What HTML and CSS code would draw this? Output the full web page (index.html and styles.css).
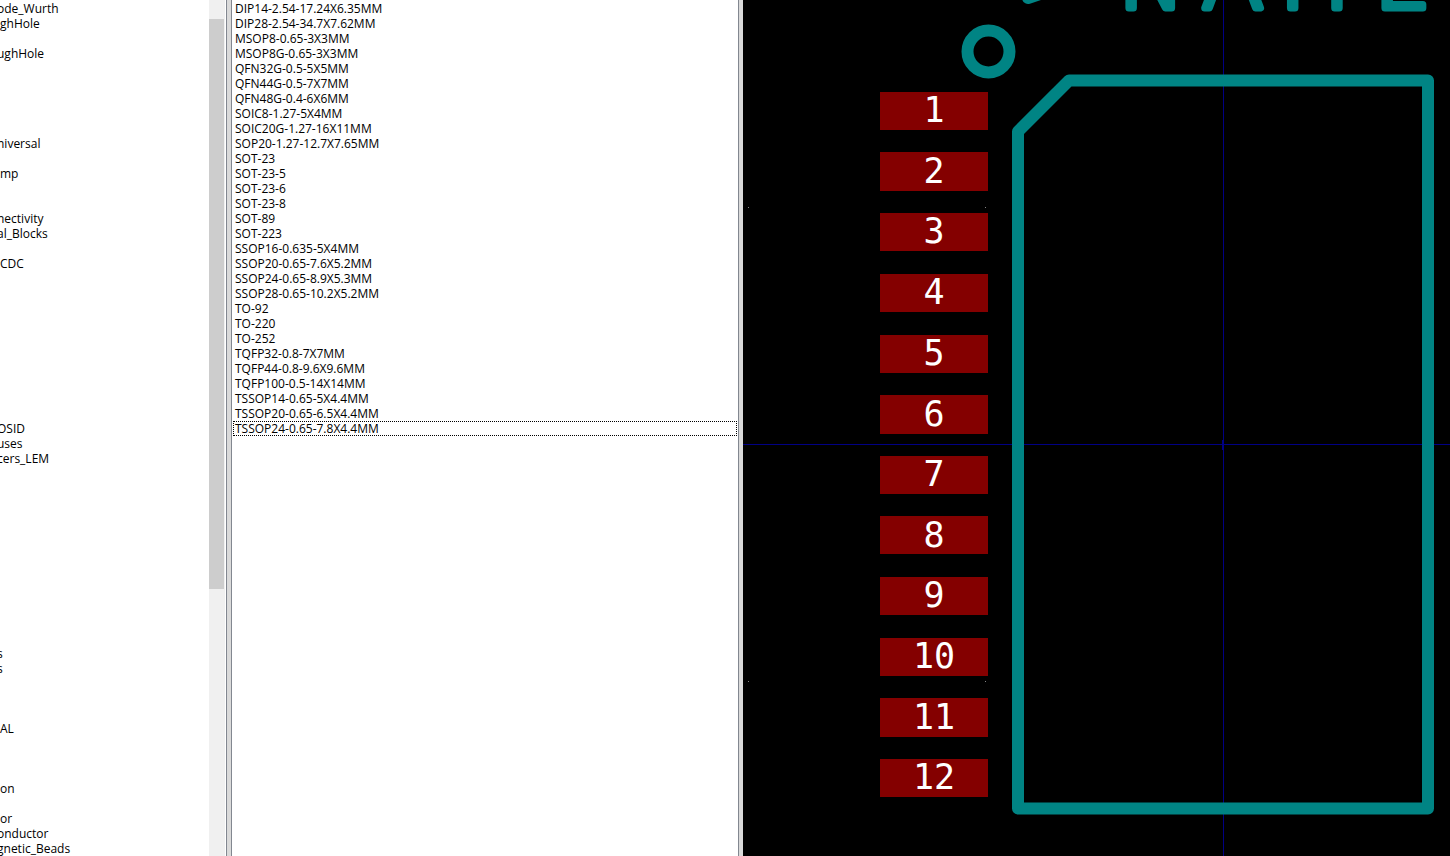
FILE: index.html
```html
<!DOCTYPE html>
<html lang="en">
<head>
<meta charset="utf-8">
<title>Footprint Library Browser</title>
<link rel="stylesheet" href="styles.css">
</head>
<body>
<main class="browser">
  <section class="libraries" aria-label="Libraries">
    <ul class="list library-list">
      <li class="cut">ode_Wurth</li><li>ghHole</li><li></li><li class="cut">ughHole</li><li></li>
      <li></li><li></li><li></li><li></li><li class="cut">niversal</li>
      <li></li><li>mp</li><li></li><li></li><li class="cut">nectivity</li>
      <li class="cut">al_Blocks</li><li></li><li>CDC</li><li></li><li></li>
      <li></li><li></li><li></li><li></li><li></li>
      <li></li><li></li><li></li><li class="cut">OSID</li><li class="cut">uses</li>
      <li class="cut">cers_LEM</li><li></li><li></li><li></li><li></li>
      <li></li><li></li><li></li><li></li><li></li>
      <li></li><li></li><li></li><li class="cut">s</li><li class="cut">s</li>
      <li></li><li></li><li></li><li>AL</li><li></li>
      <li></li><li></li><li>on</li><li></li><li>or</li>
      <li class="cut">onductor</li><li class="cut">gnetic_Beads</li>
    </ul>
    <div class="scrollbar"><div class="thumb"></div></div>
  </section>
  <div class="splitter"></div>
  <section class="footprints" aria-label="Footprints">
    <ul class="list footprint-list">
      <li>DIP14-2.54-17.24X6.35MM</li>
      <li>DIP28-2.54-34.7X7.62MM</li>
      <li>MSOP8-0.65-3X3MM</li>
      <li>MSOP8G-0.65-3X3MM</li>
      <li>QFN32G-0.5-5X5MM</li>
      <li>QFN44G-0.5-7X7MM</li>
      <li>QFN48G-0.4-6X6MM</li>
      <li>SOIC8-1.27-5X4MM</li>
      <li>SOIC20G-1.27-16X11MM</li>
      <li>SOP20-1.27-12.7X7.65MM</li>
      <li>SOT-23</li>
      <li>SOT-23-5</li>
      <li>SOT-23-6</li>
      <li>SOT-23-8</li>
      <li>SOT-89</li>
      <li>SOT-223</li>
      <li>SSOP16-0.635-5X4MM</li>
      <li>SSOP20-0.65-7.6X5.2MM</li>
      <li>SSOP24-0.65-8.9X5.3MM</li>
      <li>SSOP28-0.65-10.2X5.2MM</li>
      <li>TO-92</li>
      <li>TO-220</li>
      <li>TO-252</li>
      <li>TQFP32-0.8-7X7MM</li>
      <li>TQFP44-0.8-9.6X9.6MM</li>
      <li>TQFP100-0.5-14X14MM</li>
      <li>TSSOP14-0.65-5X4.4MM</li>
      <li>TSSOP20-0.65-6.5X4.4MM</li>
      <li class="focused">TSSOP24-0.65-7.8X4.4MM</li>
    </ul>
  </section>
  <div class="splitter splitter-end"></div>
  <section class="preview" aria-label="Footprint preview">
    <svg class="board" viewBox="0 0 707 856" preserveAspectRatio="xMinYMin slice">
      <g class="axis">
        <path class="axis-y" d="M480 0h1v856h-1z"/>
        <path d="M0 444h707v1H0zM479 440h1v10h-1z"/>
      </g>
      <g class="grid">
        <path d="M5 207h1v1H5zM242 207h1v1h-1zM5 681h1v1H5zM242 681h1v1h-1z"/>
      </g>
      <g class="silk">
        <path d="M285-2L297-6"/>
        <circle cx="245.5" cy="51.5" r="21"/>
        <path d="M275 131.500L326 80.500H685V808.500H275Z"/>
      </g>
      <text class="name" x="375 459 533 631" y="8">NAME</text>
      <g class="pads">
        <path d="M137 92h108v38H137zM137 152h108v39H137zM137 213h108v38H137zM137 274h108v38H137zM137 335h108v38H137zM137 395h108v39H137zM137 456h108v38H137zM137 516h108v38H137zM137 577h108v38H137zM137 638h108v38H137zM137 698h108v39H137zM137 759h108v38H137z"/>
      </g>
      <g class="pad-numbers">
        <text x="191" y="122">1</text>
        <text x="191" y="183">2</text>
        <text x="191" y="243">3</text>
        <text x="191" y="304">4</text>
        <text x="191" y="365">5</text>
        <text x="191" y="426">6</text>
        <text x="191" y="486">7</text>
        <text x="191" y="547">8</text>
        <text x="191" y="607">9</text>
        <text x="191" y="668">10</text>
        <text x="191" y="729">11</text>
        <text x="191" y="789">12</text>
      </g>
    </svg>
  </section>
</main>
</body>
</html>
```
FILE: styles.css
```css
* { box-sizing: border-box; }
body {
  margin: 0;
  background: #fff;
  color: #000;
  font: 12px/15px "Open Sans", "Noto Sans", sans-serif;
}
.browser {
  display: grid;
  grid-template-columns: 226px 6px 506px 5px 1fr;
  height: 100vh;
  overflow: hidden;
}
.list {
  list-style: none;
  margin: 0;
  padding: 1px 0 0;
}
.list li {
  height: 15px;
  white-space: nowrap;
}
.libraries {
  display: grid;
  grid-template-columns: 1fr 16px;
  padding-right: 1px;
  overflow: hidden;
}
.library-list { overflow: hidden; }
.cut { text-indent: -3px; }
.scrollbar {
  background: #f0f0f0;
  padding-top: 19px;
}
.thumb {
  width: 15px;
  height: 570px;
  background: #cdcdcd;
}
.splitter {
  background: #dadada;
  border: solid #828790;
  border-width: 0 1px;
}
.splitter-end { border-right: 0; }
.footprints { overflow: hidden; }
.footprint-list { padding: 1px 1px 0; }
.footprint-list li { padding-left: 2px; }
.footprint-list .focused {
  outline: 1px dotted #000;
  outline-offset: -1px;
}
.preview {
  background: #000;
  overflow: hidden;
}
.board {
  display: block;
  width: 100%;
  height: 100%;
}
.axis {
  fill: #000084;
  shape-rendering: crispEdges;
}
.grid { fill: #848484; }
.silk {
  fill: none;
  stroke: #008484;
  stroke-width: 12px;
  stroke-linejoin: round;
  stroke-linecap: round;
}
.name {
  font: 200 90px "DejaVu Sans", sans-serif;
  fill: #008484;
  stroke: #008484;
  stroke-width: 7px;
  stroke-linejoin: round;
}
.pads { fill: #840000; }
.pad-numbers {
  font: 35px "DejaVu Sans Mono", monospace;
  fill: #fff;
  text-anchor: middle;
}
```
